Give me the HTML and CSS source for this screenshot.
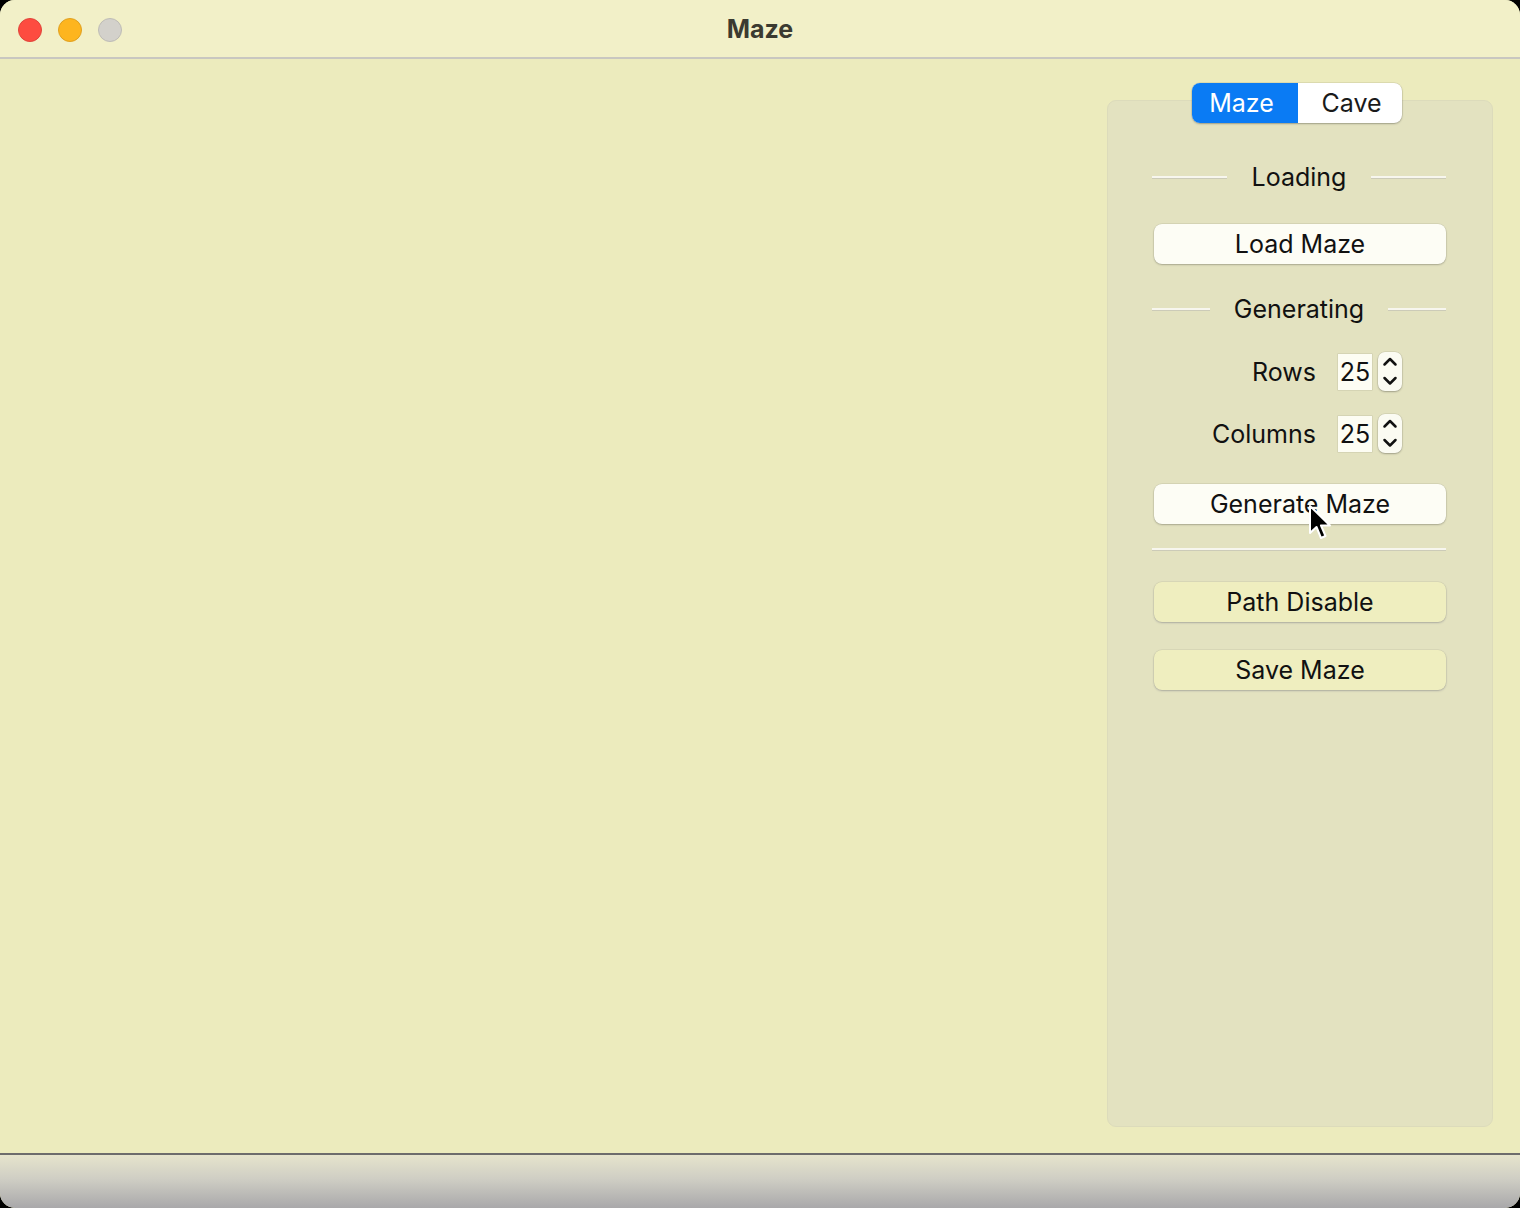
FILE: index.html
```html
<!DOCTYPE html>
<html>
<head>
<meta charset="utf-8">
<link rel="stylesheet" href="styles.css">
</head>
<body>
<div class="window">
  <div class="titlebar">
    <div class="lights">
      <span class="light red"></span>
      <span class="light yellow"></span>
      <span class="light grey"></span>
    </div>
    <div class="title">Maze</div>
  </div>
  <div class="content">
    <div class="panel">
      <div class="segmented">
        <div class="seg active">Maze</div>
        <div class="seg">Cave</div>
      </div>
      <div class="section sec-loading"><span class="line"></span><span class="sec-title">Loading</span><span class="line"></span></div>
      <button class="btn white b-load">Load Maze</button>
      <div class="section sec-gen"><span class="line"></span><span class="sec-title">Generating</span><span class="line"></span></div>
      <div class="field f-rows">
        <span class="label">Rows</span>
        <span class="num">25</span>
        <span class="stepper">
          <svg width="24" height="39" viewBox="0 0 24 39"><path d="M6.5 12.5 L12 7 L17.5 12.5" fill="none" stroke="#111" stroke-width="2.5" stroke-linecap="round" stroke-linejoin="round"/><path d="M6.5 26 L12 31.5 L17.5 26" fill="none" stroke="#111" stroke-width="2.5" stroke-linecap="round" stroke-linejoin="round"/></svg>
        </span>
      </div>
      <div class="field f-cols">
        <span class="label">Columns</span>
        <span class="num">25</span>
        <span class="stepper">
          <svg width="24" height="39" viewBox="0 0 24 39"><path d="M6.5 12.5 L12 7 L17.5 12.5" fill="none" stroke="#111" stroke-width="2.5" stroke-linecap="round" stroke-linejoin="round"/><path d="M6.5 26 L12 31.5 L17.5 26" fill="none" stroke="#111" stroke-width="2.5" stroke-linecap="round" stroke-linejoin="round"/></svg>
        </span>
      </div>
      <button class="btn white b-gen">Generate Maze</button>
      <div class="divider"></div>
      <button class="btn soft b-path">Path Disable</button>
      <button class="btn soft b-save">Save Maze</button>
      <svg class="cursor" width="26" height="38" viewBox="0 0 26 38"><path d="M2 2 L2 29 L8.5 23 L13 34 L17.5 32 L13 21.5 L22 21.5 Z" fill="#000" stroke="#fff" stroke-width="2" stroke-linejoin="round"/></svg>
    </div>
  </div>
  <div class="bottombar"></div>
</div>
</body>
</html>
```
FILE: styles.css
```css
html, body {
  margin: 0;
  padding: 0;
  background: #000;
}
body {
  width: 1520px;
  height: 1208px;
  overflow: hidden;
  font-family: Inter, "Noto Sans", "Liberation Sans", sans-serif;
}
.window {
  width: 1520px;
  height: 1208px;
  border-radius: 15px;
  overflow: hidden;
  background: #ecebbd;
  display: flex;
  flex-direction: column;
}
.titlebar {
  height: 57px;
  flex: 0 0 57px;
  background: #f2f0c8;
  border-bottom: 2px solid #c9c7c0;
  position: relative;
  display: flex;
  align-items: center;
  justify-content: center;
}
.lights {
  position: absolute;
  left: 18px;
  top: 18px;
  display: flex;
  gap: 16px;
}
.light {
  width: 24px;
  height: 24px;
  border-radius: 50%;
  box-sizing: border-box;
}
.red { background: #fd4c40; border: 1px solid #e0443a; }
.yellow { background: #fdb51f; border: 1px solid #e0a020; }
.grey { background: #d3d1cb; border: 1px solid #bebcb6; }
.title {
  font-weight: 700;
  font-size: 25px;
  color: #3b3a30;
  margin-top: 1px;
}
.content {
  flex: 1;
  display: flex;
  justify-content: flex-end;
  padding: 41px 27px 26px 0;
}
.panel {
  width: 386px;
  box-sizing: border-box;
  background: #e3e2c0;
  border: 1px solid #dcdbbb;
  border-radius: 9px;
  padding: 0 46px 0 44px;
  display: flex;
  flex-direction: column;
  position: relative;
}
.segmented {
  align-self: center;
  margin-top: -18px;
  margin-left: -5px;
  display: flex;
  height: 40px;
  border-radius: 8px;
  overflow: hidden;
  box-shadow: 0 1px 2px rgba(0,0,0,0.25), 0 0 0 0.5px rgba(0,0,0,0.12);
  background: #fff;
}
.seg {
  font-size: 25px;
  line-height: 40px;
  color: #1a1a1a;
  text-align: center;
  box-sizing: border-box;
}
.seg:first-child { width: 106px; padding-right: 6px; }
.seg:last-child { width: 104px; padding-left: 4px; }
.seg.active {
  background: #0a7bf4;
  color: #fff;
}
.section {
  display: flex;
  align-items: center;
  height: 30px;
  font-size: 25px;
  color: #111;
}
.sec-loading { margin-top: 39px; }
.sec-gen { margin-top: 30px; }
.section .line {
  flex: 1;
  height: 2px;
  background: #f7f6ee;
  box-shadow: 0 1px 0 rgba(160,160,170,0.35);
}
.sec-loading .sec-title { margin: 0 25px; }
.sec-gen .sec-title { margin: 0 24px; }
.btn {
  display: block;
  width: 292px;
  height: 40px;
  margin-left: 2px;
  border: none;
  border-radius: 8px;
  font-family: inherit;
  font-size: 25px;
  color: #111;
  padding: 0;
  line-height: 40px;
}
.btn.white {
  background: #fdfdf5;
  box-shadow: 0 1px 2px rgba(0,0,0,0.22), 0 0 0 0.5px rgba(0,0,0,0.1);
}
.btn.soft {
  background: #efeebf;
  box-shadow: 0 1px 2px rgba(40,40,90,0.25), 0 0 0 0.5px rgba(0,0,0,0.08);
}
.b-load { margin-top: 32px; }
.b-gen { margin-top: 31px; }
.b-path { margin-top: 32px; }
.b-save { margin-top: 28px; }
.field {
  display: grid;
  grid-template-columns: 164px 34px 24px;
  column-gap: 22px;
  align-items: center;
  height: 39px;
  font-size: 25px;
  color: #111;
}
.field .stepper { margin-left: -16px; }
.f-rows { margin-top: 28px; }
.f-cols { margin-top: 23px; }
.label { text-align: right; }
.num {
  background: #fdfdf3;
  height: 36px;
  line-height: 36px;
  text-align: center;
  box-shadow: 0 0 0 0.5px rgba(0,0,0,0.12);
}
.stepper {
  width: 24px;
  height: 39px;
  background: #fbfbf2;
  border-radius: 7px;
  box-shadow: 0 1px 2px rgba(0,0,0,0.25), 0 0 0 0.5px rgba(0,0,0,0.1);
  display: block;
}
.stepper svg { display: block; }
.divider {
  margin-top: 24px;
  height: 2px;
  background: #f7f6ee;
  box-shadow: 0 1px 0 rgba(160,160,170,0.35);
}
.cursor {
  position: absolute;
  left: 200px;
  top: 403px;
}
.bottombar {
  flex: 0 0 53px;
  border-top: 2px solid #6d6c6c;
  background: linear-gradient(#e6e4cc, #cfcec4 45%, #a9a8aa);
}
```
